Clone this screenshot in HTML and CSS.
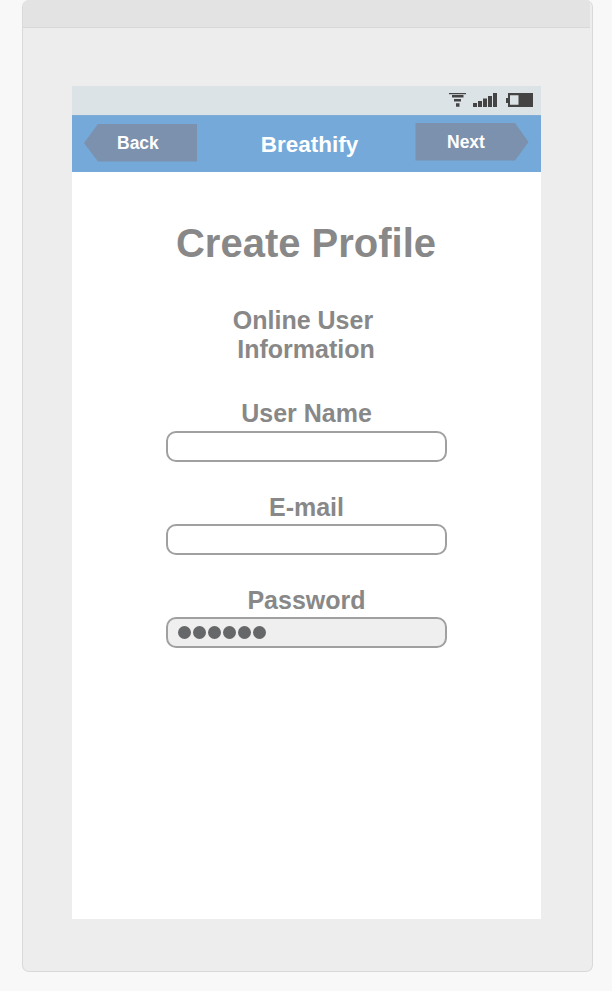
FILE: index.html
```html
<!DOCTYPE html>
<html lang="en">
<head>
<meta charset="utf-8">
<title>Breathify</title>
<link rel="stylesheet" href="styles.css">
</head>
<body>
<div class="device">
  <div class="device-top"></div>
  <main class="screen">
    <div class="status">
      <svg width="92" height="29" viewBox="0 0 92 29" fill="#444">
        <path d="M0 7h17v1.300H0zM3 9h11.500v2.500H3zM5 13h7v2.500H5zM7 17.300h3.500v3.500H7z"/>
        <path d="M24 17h4v4h-4zM29 15h4v6h-4zM34 12.500h4v8.500h-4zM39 10h4v11h-4zM44 7h4v14h-4z"/>
        <path fill-rule="evenodd" d="M59 7h25v14H59v-4h-2v-5h2zM61 9.300v9.400h8.500V9.300z"/>
      </svg>
    </div>
    <header class="bar">
      <button class="nav back"><svg width="114" height="38" viewBox="0 0 114 38"><path d="M14 0H113V37.500H14L0 19z"/></svg><span>Back</span></button>
      <div class="brand">Breathify</div>
      <button class="nav next"><svg width="114" height="38" viewBox="0 0 114 38"><path d="M.5 0H100L113.500 19L100 37.500H.5z"/></svg><span>Next</span></button>
    </header>
    <form class="form">
      <h1>Create Profile</h1>
      <h2><span class="first">Online User</span><span>Information</span></h2>
      <label>User Name<span class="field"></span></label>
      <label class="email">E-mail<span class="field"></span></label>
      <label class="password">Password<span class="field filled"><i></i><i></i><i></i><i></i><i></i><i></i></span></label>
    </form>
  </main>
</div>
</body>
</html>
```
FILE: styles.css
```css
* { box-sizing: border-box; }
body {
  margin: 0;
  height: 991px;
  overflow: hidden;
  background: #f8f8f8;
  font-family: "Liberation Sans", Arial, sans-serif;
  font-weight: bold;
}
.device {
  width: 571px;
  height: 972px;
  margin-left: 22px;
  border: 1px solid #d9d9d9;
  border-top: 0;
  border-radius: 7px;
  background: #ededed;
  overflow: hidden;
}
.device-top {
  height: 28px;
  margin-right: 2px;
  background: #e3e3e3;
  border-bottom: 1px solid #d8d8d8;
}
.screen {
  width: 469px;
  height: 833px;
  margin: 58px 0 0 49px;
  background: #fff;
}
.status {
  height: 29px;
  display: flex;
  justify-content: flex-end;
  background: #dce3e6;
}
.bar {
  height: 57px;
  display: grid;
  grid-template-columns: 114px 1fr 114px;
  padding: 0 12px;
  background: #74a9d9;
  border-top: 1px solid #80add5;
  color: #fff;
}
.nav {
  display: grid;
  width: 114px;
  height: 38px;
  padding: 0;
  border: 0;
  background: none;
  color: #fff;
  font: bold 17.5px/20px "Liberation Sans", Arial, sans-serif;
  text-align: left;
}
.nav svg, .nav span { grid-area: 1 / 1; }
.nav svg { display: block; fill: #7b91ae; }
.back { margin-top: 8px; }
.next { margin-top: 7px; }
.back span { padding: 9px 0 0 33px; }
.next span { padding: 9px 0 0 32px; }
.brand {
  padding: 16px 0 0 6px;
  text-align: center;
  font-size: 22.5px;
  line-height: 26px;
}
.form { padding-right: 1px; color: #888; text-align: center; }
h1 {
  margin: 0;
  padding-top: 48px;
  font-size: 40px;
  line-height: 46px;
}
h2 {
  display: flex;
  flex-direction: column;
  margin: 40px 0 0;
  font-size: 25px;
  line-height: 29px;
}
h2 .first { margin-right: 6px; }
label {
  display: block;
  margin-top: 35px;
  padding-left: 1px;
  font-size: 25px;
  line-height: 29px;
}
.email { margin-top: 31px; }
.password { margin-top: 31px; }
.field {
  display: flex;
  align-items: center;
  gap: 2px;
  width: 281px;
  height: 31px;
  margin: 3px auto 0;
  padding-left: 10px;
  border: 2px solid #a0a0a0;
  border-radius: 10px;
  background: #fff;
}
.email .field, .password .field { margin-top: 2px; }
.filled { background: #efefef; }
.filled i {
  width: 13px;
  height: 13px;
  border-radius: 50%;
  background: #666769;
}
```
